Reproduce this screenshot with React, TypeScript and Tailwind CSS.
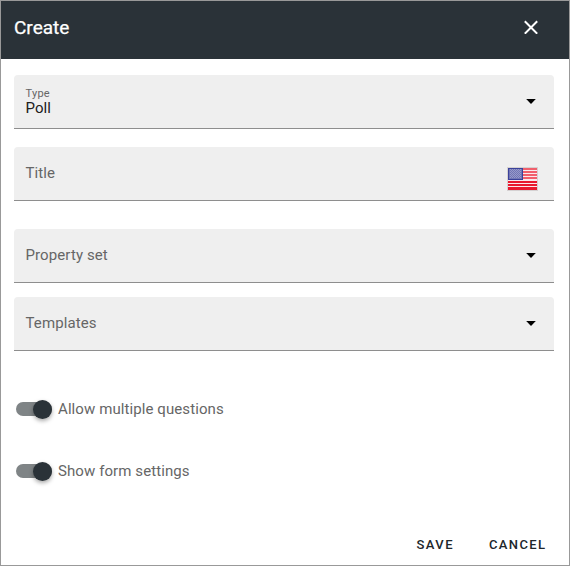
import type { ReactNode } from 'react';

function Caret() {
  return (
    <svg width="10" height="5" viewBox="0 0 10 5" className="mr-[18px]">
      <path d="M.2 0h9.6L5 5z" fill="#000" />
    </svg>
  );
}

function Flag() {
  return (
    <svg width="31" height="24" viewBox="0 0 31 24" className="mt-[10px] mr-4" shapeRendering="crispEdges">
      <rect width="31" height="24" fill="#d5d1d2" />
      <rect x="1" y="1" width="29" height="22" fill="#fbe9ec" />
      {[1, 4, 7, 10].map((y) => (
        <rect key={y} x="15" y={y} width="15" height="2" fill={y === 1 ? '#f0606d' : '#f25e6c'} />
      ))}
      {[14, 17, 20].map((y) => (
        <rect key={y} x="1" y={y} width="29" height="2" fill="#e8192f" />
      ))}
      <rect x="1" y="22" width="29" height="1" fill="#e8192f" />
      <rect x="1" y="1" width="15" height="12" fill="#3b429a" />
      <rect x="2" y="2" width="13" height="10" fill="#7175b5" />
      {[2, 4, 6, 8, 10].map((y) =>
        [3, 5, 7, 9, 11, 13].map((x) => (
          <rect key={`${x}-${y}`} x={x} y={y} width="1" height="1" fill="#9799c9" />
        )),
      )}
      {[3, 5, 7, 9].map((y) =>
        [4, 6, 8, 10, 12].map((x) => (
          <rect key={`${x}-${y}`} x={x} y={y} width="1" height="1" fill="#9799c9" />
        )),
      )}
    </svg>
  );
}

function Field({ label, value, children, className }: { label: string; value?: string; children: ReactNode; className: string }) {
  return (
    <div className={`flex h-[54px] items-center justify-between rounded-t border-b border-[#8e8e8e] bg-[#efefef] pl-[11.5px] ${className}`}>
      {value ? (
        <div className="flex flex-col pb-px">
          <span className="text-[11px] leading-[13px] tracking-[0.25px] text-[#666]">{label}</span>
          <span className="text-[15px] leading-4 tracking-[0.1px] text-[#202020]">{value}</span>
        </div>
      ) : (
        <span className="pb-px text-[15px] leading-5 tracking-[0.1px] text-[#666]">{label}</span>
      )}
      {children}
    </div>
  );
}

function Toggle({ label, className }: { label: string; className: string }) {
  return (
    <div className={`flex h-5 items-center ${className}`}>
      <div className="flex h-[14px] w-9 items-center justify-end rounded-full bg-[#7f8486]">
        <div className="h-[19px] w-[19px] shrink-0 rounded-full bg-[#2a3238] shadow-[0_2px_4px_rgba(0,0,0,0.35)]" />
      </div>
      <span className="ml-1.5 text-[15px] leading-5 tracking-[0.09px] text-[#666]">{label}</span>
    </div>
  );
}

export default function App() {
  return (
    <div className="flex h-[566px] w-[570px] flex-col border border-[#999] bg-white font-['Roboto',sans-serif]">
      <header className="flex h-[58px] shrink-0 items-center justify-between bg-[#2a3238] pr-[31px] pl-[13px] text-white">
        <h1 className="pb-1 text-[19px] leading-6 font-normal [-webkit-text-stroke:0.25px_white]">Create</h1>
        <svg width="14" height="14" viewBox="0 0 14 14" className="mb-[6px]" fill="none" stroke="white" strokeWidth="2">
          <path d="M.8 1.3l12.4 12.4M13.2 1.3L.8 13.7" />
        </svg>
      </header>
      <main className="flex flex-col pt-4 pr-[15px] pl-[13px]">
        <Field label="Type" value="Poll" className=""><Caret /></Field>
        <Field label="Title" className="mt-[18px]"><Flag /></Field>
        <Field label="Property set" className="mt-7"><Caret /></Field>
        <Field label="Templates" className="mt-[14px]"><Caret /></Field>
        <Toggle label="Allow multiple questions" className="mt-12 ml-0.5" />
        <Toggle label="Show form settings" className="mt-[42px] ml-0.5" />
      </main>
      <footer className="mt-auto flex justify-end gap-[35px] pr-[22.5px] pb-3 text-[13px] leading-4 font-medium tracking-[1.4px] text-[#20262b]">
        <button>SAVE</button>
        <button>CANCEL</button>
      </footer>
    </div>
  );
}
